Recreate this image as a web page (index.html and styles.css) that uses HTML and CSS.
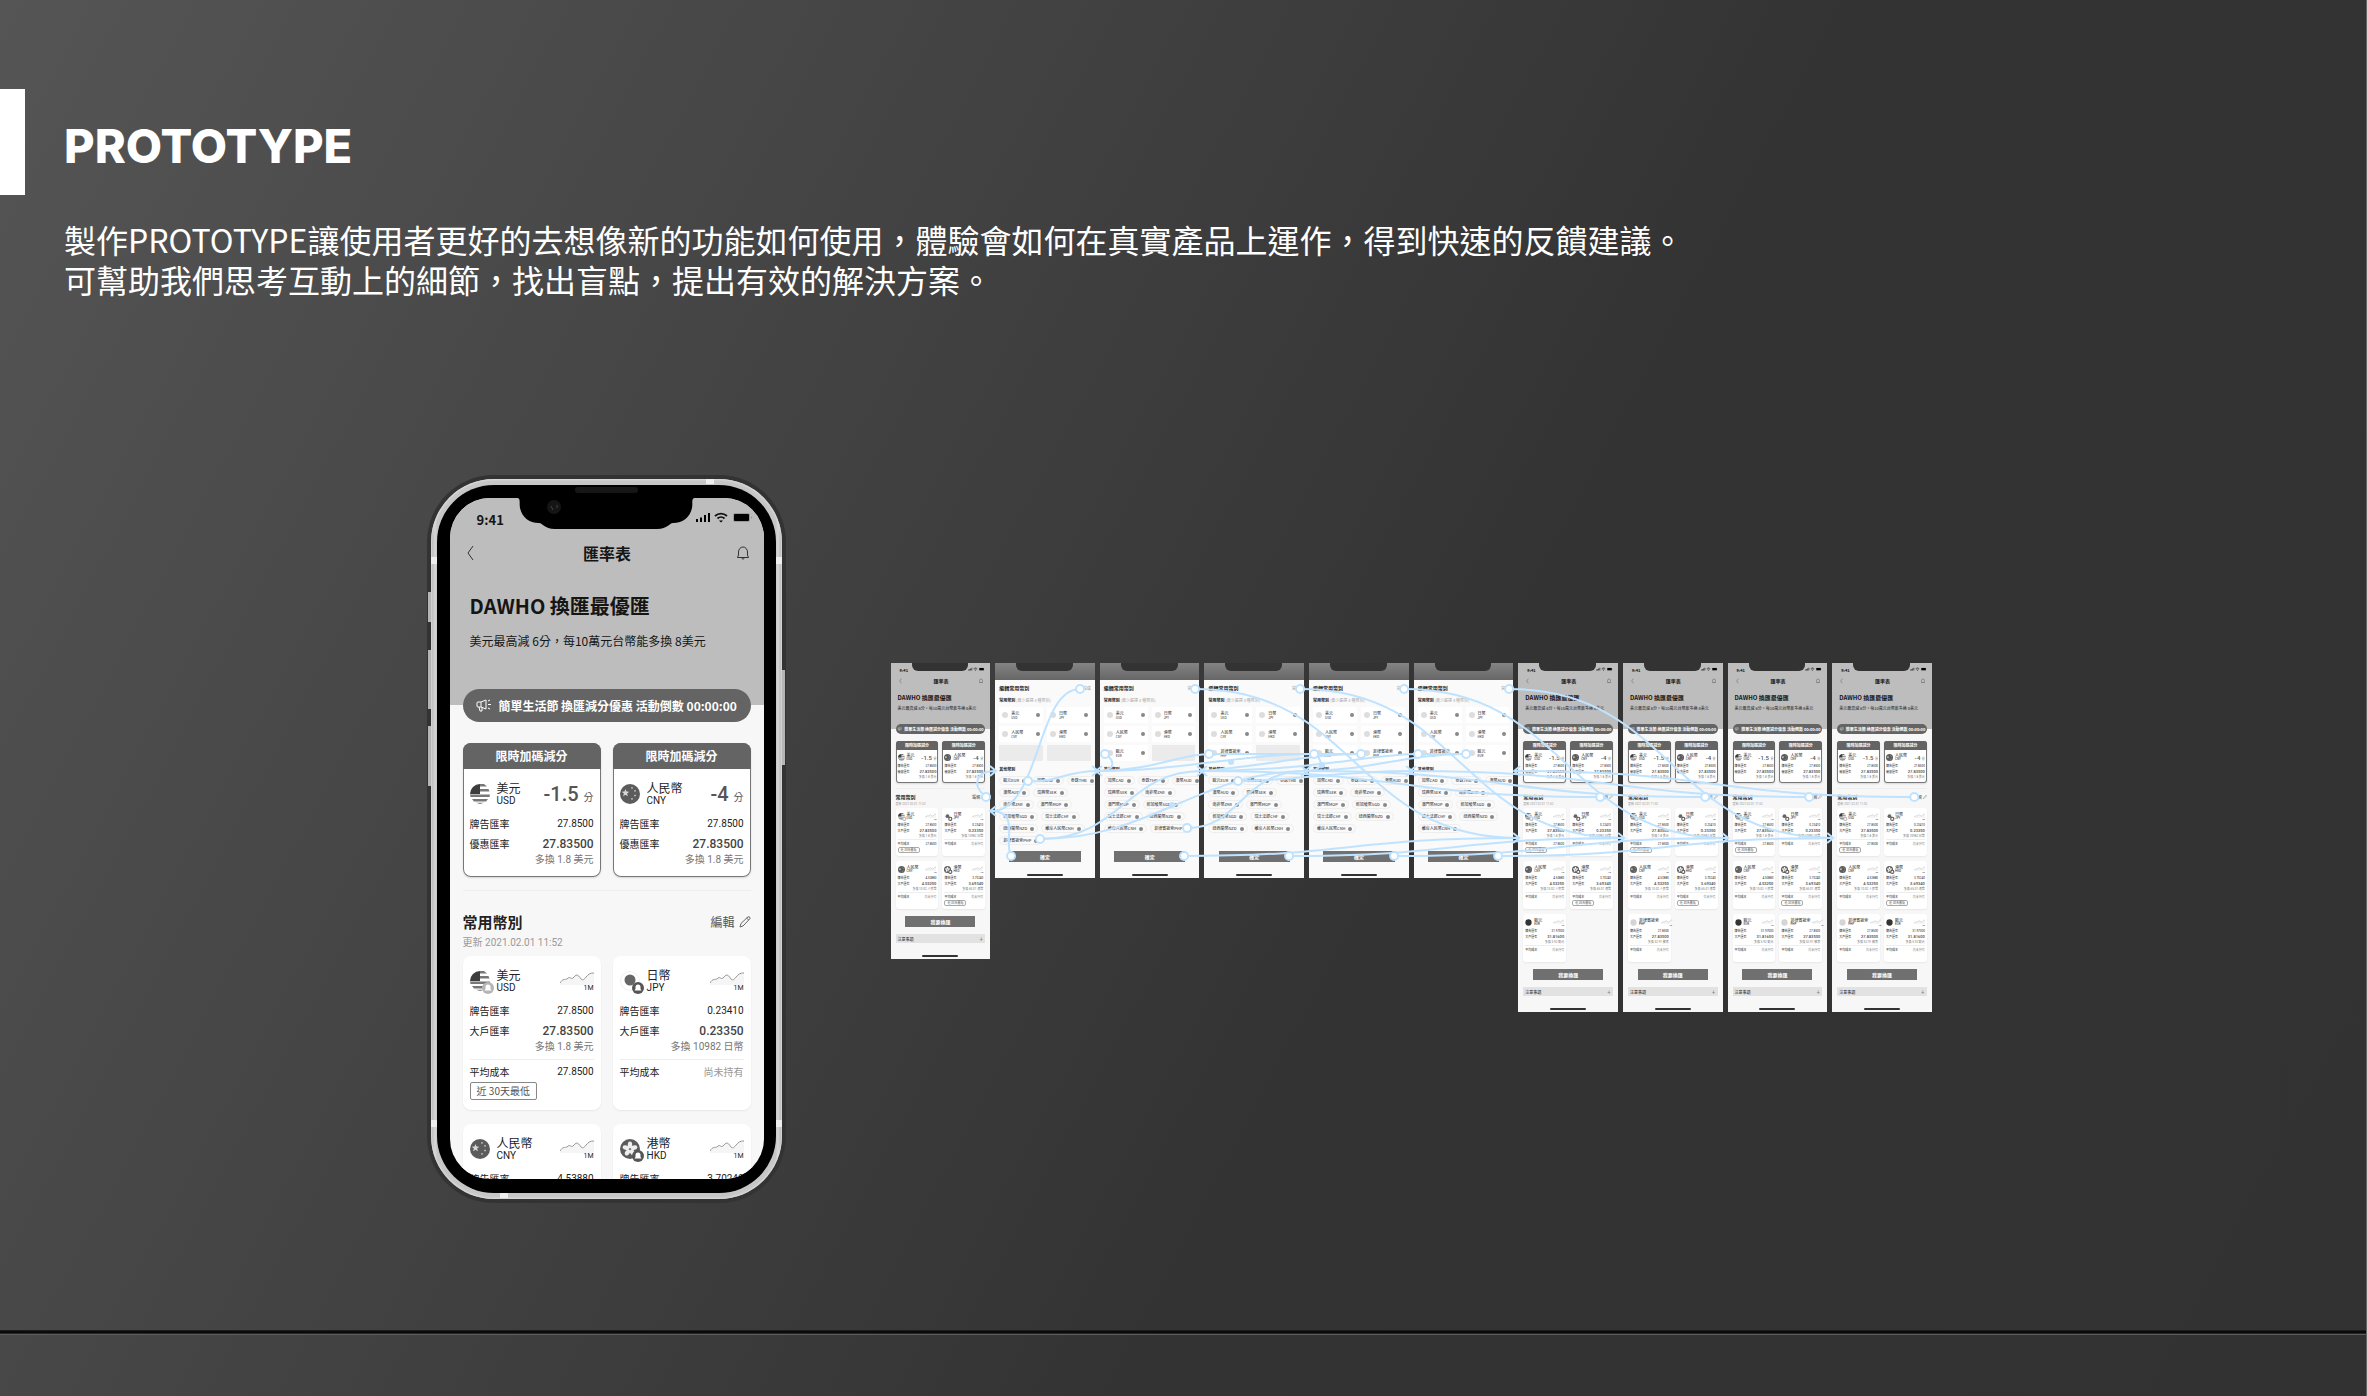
FILE: index.html
```html
<!DOCTYPE html>
<html lang="zh-Hant">
<head>
<meta charset="utf-8">
<title>Prototype</title>
<link rel="stylesheet" href="styles.css">
</head>
<body>
<main class="page">
  <header class="heading">
    <span class="marker"></span>
    <h1>PROTOTYPE</h1>
  </header>
  <p class="intro">製作PROTOTYPE讓使用者更好的去想像新的功能如何使用，體驗會如何在真實產品上運作，得到快速的反饋建議。<br>可幫助我們思考互動上的細節，找出盲點，提出有效的解決方案。</p>

  <section class="stage">
    <div class="device">
      <i class="key mute"></i><i class="key up"></i><i class="key down"></i><i class="key power"></i>
      <i class="band b1"></i><i class="band b2"></i><i class="band b3"></i><i class="band b4"></i><i class="band b5"></i><i class="band b6"></i>
      <div class="bezel">
        <i class="speaker"></i>
        <svg class="notch" viewBox="0 0 178 36"><path d="M0 0C4 0 2 5 3 10C5 19 12 25 22 25C26 25 27 31 38 31H140C151 31 152 25 156 25C166 25 173 19 175 10C176 5 174 0 178 0Z"/><circle cx="37" cy="9" r="7" fill="#151515"/><path d="M34 8l2 4M40 7v3" stroke="#444" fill="none"/></svg>
        <div class="screen" id="phone"></div>
      </div>
    </div>
    <div class="flow">
      <div class="frames" id="frames"></div>
      <svg class="wires" viewBox="0 0 1041 350" preserveAspectRatio="none" id="wires"></svg>
    </div>
  </section>
  <hr class="rule">
</main>
<script src="app.js"></script>
</body>
</html>
```
FILE: styles.css
```css
* { box-sizing: border-box; margin: 0; padding: 0; }
html { background: #333; }
body {
  font-family: "Noto Sans CJK TC", sans-serif;
  color: #fff;
  background: linear-gradient(118deg, #555 0%, #333 60%, #323232 100%);
}
.page { min-height: 100vh; padding-top: 89px; border-right: 1px solid #666; overflow: hidden; }
.heading { display: flex; align-items: center; gap: 39px; }
.marker { width: 25px; height: 106px; background: #fff; }
h1 { font: 800 47px/60px Inter, sans-serif; padding-top: 8px; }
.intro { margin: 24px 64px 0; font-size: 32px; line-height: 40px; }
.rule { margin-top: 131px; border: 0; height: 5px; background: linear-gradient(#1c1c1c 0 1px, #0a0a0a 1px 3px, #262626 3px 4px, #5c5c5c 4px); }
.stage { display: flex; align-items: center; margin-top: 180px; padding-left: 18.2%; }

/* Device shell */
.device {
  position: relative; flex: none; width: 351px; height: 720px; padding: 6px;
  border-radius: 63px; background: linear-gradient(90deg, #a8a8a8, #d8d8d8 4px, #c6c6c6 6px, #c6c6c6 345px, #d8d8d8 347px, #a8a8a8);
  box-shadow: 0 0 0 4px #333, inset 0 0 2px 1px #ddd;
}
.bezel { position: relative; height: 100%; padding: 13px 12px 14px 13px; border-radius: 57px; background: #000; }
.screen { height: 100%; border-radius: 40px; overflow: hidden; }
.notch { position: absolute; left: 80px; top: 13px; width: 178px; height: 36px; fill: #000; }
.speaker { position: absolute; left: 138px; top: 2px; width: 63px; height: 6px; border-radius: 4px; background: #161616; }
.key { position: absolute; width: 3px; left: -3px; background: #b5b5b5; }
.mute { top: 113px; height: 30px; }
.up { top: 171px; height: 59px; }
.down { top: 247px; height: 60px; }
.power { left: 351px; top: 191px; height: 95px; }
.band { position: absolute; background: #eee; width: 6px; height: 7px; }
.b1 { top: 78px; left: 0; } .b2 { top: 78px; right: 0; }
.b3 { bottom: 72px; left: 0; } .b4 { bottom: 72px; right: 0; }
.b5 { top: 0; right: 68px; width: 8px; height: 5px; } .b6 { bottom: 1px; left: 69px; width: 8px; height: 5px; }

/* Exchange-rate screen: sizes are variables so that the flow frames can use a smaller set */
.screen {
  --side: 13px; --gap: 12px; --inset: 7px; --radius: 8px; --flag: 20px;
  --h1: 20px; --h2: 16px; --h3: 15px; --m: 12px; --s: 10px; --xs: 7px;
  --status: 32px; --nav: 45px; --hero-top: 17px; --hero-lh: 28px; --sub-top: 11px; --sub-lh: 20px; --hero-bottom: 54px;
  --pill: 33px; --pill-up: -16px; --promo-top: 21px; --promo-head: 26px; --pad: 12px; --name: 14px; --code: 12px;
  --row-top: 10px; --row: 14px; --row2-top: 4px; --row2: 18px; --row3: 14px; --end: 10px;
  --line-top: 13px; --sec-top: 20px; --sec: 22px; --upd-top: 3px; --upd: 14px; --list-top: 6px; --list-gap: 14px;
  --avg: 5px; --tag-top: 3px; --tag: 18px; --tag-pad: 6px; --big: 20px;
  color: #222; background: #f7f7f7;
}
.screen button { font-family: inherit; border: 0; background: none; color: inherit; }
.hero { background: #bdbdbd; padding-bottom: var(--hero-bottom); color: #151515; }
.status { display: flex; justify-content: space-between; align-items: center; height: var(--status); padding: 12px 11px 0 27px; font-weight: 700; font-size: 13px; line-height: 14px; }
.status svg { width: 57px; height: 12px; margin-top: -6px; }
.nav { display: flex; justify-content: space-between; align-items: center; height: var(--nav); padding: 0 calc(var(--side) + 2px) 0 calc(var(--side) + 3px); font-size: var(--h2); font-weight: 700; }
.nav button { display: flex; }
.nav svg { width: var(--m); height: calc(var(--m) + 2px); }
.hero h2 { margin-top: var(--hero-top); padding-left: calc(var(--side) + var(--inset)); font-size: var(--h1); line-height: var(--hero-lh); font-weight: 700; white-space: nowrap; }
.hero p { margin-top: var(--sub-top); padding-left: calc(var(--side) + var(--inset)); font-size: var(--m); line-height: var(--sub-lh); white-space: nowrap; }
.body { padding: 0 var(--side); }
.pill { display: flex; align-items: center; justify-content: center; gap: var(--pill-gap, 6px); height: var(--pill); margin-top: var(--pill-up); border-radius: 20px; background: #646464; color: #fff; font-size: var(--m); font-weight: 700; white-space: nowrap; }
.pill svg { width: 16px; height: 14px; flex: none; }
.grid { display: grid; grid-template-columns: minmax(0, 1fr) minmax(0, 1fr); gap: var(--list-gap) var(--gap); margin-top: var(--list-top); }
.promos { margin-top: var(--promo-top); }
.card { min-width: 0; border-radius: var(--radius); background: #fff; box-shadow: 0 1px 2px #0001; padding: var(--pad) var(--inset) var(--end); }
.promo { padding: 0 0 var(--end); overflow: hidden; box-shadow: inset 0 0 0 1px #777, 0 1px 2px #0002; }
.promo h3 { height: var(--promo-head); line-height: var(--promo-head); text-align: center; font-size: var(--m); font-weight: 700; color: #fff; background: #646464; }
.promo .inner { padding: var(--pad) var(--inset) 0; }
.fx { display: flex; gap: var(--inset); align-items: center; }
.fx .flag { position: relative; width: var(--flag); height: var(--flag); flex: none; display: block; overflow: visible; }
.fx .label { flex: 1; font-size: var(--m); line-height: var(--name); white-space: nowrap; }
.fx .label small { display: block; font: 400 var(--s)/var(--code) Roboto, sans-serif; }
.cut { font: 500 var(--big)/var(--flag) Roboto, sans-serif; color: #555; white-space: nowrap; }
.cut small { font: 400 var(--s) "Noto Sans CJK TC", sans-serif; }
.trend { font: 400 var(--xs)/var(--xs) Roboto, sans-serif; text-align: right; }
.trend svg { display: block; width: 34px; height: 15px; }
.row { display: flex; justify-content: space-between; font-size: var(--s); line-height: var(--row); margin-top: var(--row2-top); white-space: nowrap; }
.row b, .more { font-family: Roboto, "Noto Sans CJK TC", sans-serif; font-weight: 400; }
.row.first { margin-top: var(--row-top); }
.row.rate { line-height: var(--row2); }
.row.rate b { font-size: var(--m); font-weight: 500; color: #444; }
.more { text-align: right; font-size: var(--s); line-height: var(--row3); color: #777; white-space: nowrap; }
.row.avg { margin-top: var(--avg); padding-top: var(--avg); border-top: 1px solid #eee; }
.row .none { color: #999; }
.tag { display: block; width: max-content; margin-top: var(--tag-top); height: var(--tag); line-height: calc(var(--tag) - 2px); padding: 0 var(--tag-pad); border: 1px solid #888; border-radius: 2px; font-size: var(--s); color: #555; white-space: nowrap; }
.line { height: 1px; margin-top: var(--line-top); background: #eee; }
.sec { display: flex; justify-content: space-between; margin-top: var(--sec-top); line-height: var(--sec); }
.sec h3 { font-size: var(--h3); line-height: var(--sec); font-weight: 700; }
.sec button { display: flex; align-items: center; gap: 4px; font-size: var(--m); line-height: var(--sec); color: #555; }
.sec svg { width: var(--m); height: var(--m); }
.upd { margin-top: var(--upd-top); font: 400 var(--s)/var(--upd) Roboto, "Noto Sans CJK TC", sans-serif; color: #999; }

/* Small frames of the flow */
.flow { position: relative; margin-left: 109px; padding-bottom: 3px; flex: none; width: 53.8%; }
.frames { display: grid; grid-template-columns: repeat(10, minmax(0, 1fr)); gap: 5px; align-items: start; }
.mini {
  --side: 5px; --gap: 4px; --inset: 2px; --radius: 3px; --flag: 7px;
  --h1: 6px; --h2: 5px; --h3: 5px; --m: 4px; --s: 3px; --xs: 2px; --big: 6px;
  --status: 11px; --nav: 13px; --hero-top: 7px; --hero-lh: 8px; --sub-top: 3px; --sub-lh: 6px; --hero-bottom: 18px;
  --pill: 10px; --pill-up: -5px; --pill-gap: 1px; --promo-top: 7px; --promo-head: 9px; --pad: 3px; --name: 4px; --code: 4px;
  --row-top: 2px; --row: 6px; --row2-top: 0px; --row2: 6px; --row3: 4px; --end: 4px;
  --line-top: 5px; --sec-top: 5px; --sec: 6px; --upd-top: 2px; --upd: 4px; --list-top: 2px; --list-gap: 5px;
  --avg: 1px; --tag-top: 0px; --tag: 6px; --tag-pad: 2px;
  position: relative; height: auto; border-radius: 0; padding-bottom: 16px;
}
.mini::before { content: ""; position: absolute; left: 21%; right: 22%; top: 0; height: 8px; border-radius: 0 0 6px 6px; background: #333; }
.mini::after { content: ""; position: absolute; left: 32%; right: 32%; bottom: 2px; height: 2px; border-radius: 1px; background: #333; }
.mini .status { padding: 3px 5px 0 9px; font-size: 4px; line-height: 6px; }
.mini .status svg { width: 17px; height: 4px; margin-top: -2px; }
.mini .pill svg { width: 6px; height: 4px; }
.mini .trend svg { width: 11px; height: 5px; }
.mini .sec button { gap: 1px; }
.mini .grid:not(.promos) .card { min-height: 48px; padding: 4px 2px 3px; }
.mini .promo { min-height: 42px; }
.mini .tag { border-color: #aaa; }
.cta { display: block; width: 78%; height: 11px; margin: 7px auto 0; line-height: 11px; text-align: center; font-size: 5px; font-weight: 700; }
.screen .cta { background: #707070; color: #fff; }
.notice { display: flex; justify-content: space-between; align-items: center; width: 100%; height: 9px; margin-top: 7px; padding: 0 2px; font-size: 4px; }
.screen .notice { background: #e2e2e2; }

.edit { background: linear-gradient(#848484, #666 17px, #fafafa 17px); padding-top: 17px; height: 215px; }
.sheet { height: 182px; display: flex; flex-direction: column; padding: 4px 4px 0; border-radius: 2px 2px 0 0; background: #fafafa; }
.sheet h2 { display: flex; justify-content: space-between; align-items: center; font-size: 5px; line-height: 8px; font-weight: 700; }
.sheet h2 button { font-size: 4px; line-height: 8px; color: #888; }
.sheet h3 { margin-top: 5px; font-size: 4px; line-height: 6px; font-weight: 700; white-space: nowrap; }
.sheet h3 span { font-weight: 400; color: #aaa; }
.slots { display: grid; grid-template-columns: minmax(0, 1fr) minmax(0, 1fr); gap: 3px 4px; margin-top: 4px; }
.slot { display: flex; align-items: center; gap: 3px; height: 16px; padding: 0 3px; background: #fff; border-radius: 1px; font-size: 4px; line-height: 5px; white-space: nowrap; }
.slot.empty { background: #ebebeb; }
.slot i { width: 6px; height: 6px; border-radius: 50%; background: #ddd; }
.slot span { flex: 1; }
.slot small { display: block; font-size: 3px; line-height: 4px; }
.dot { width: 4px; height: 4px; border-radius: 50%; background: #888; flex: none; }
.chips { margin-top: 4px; display: grid; gap: 3px; }
.chips div { display: flex; gap: 3px; }
.chip { display: flex; align-items: center; gap: 3px; height: 9px; padding: 0 3px; border: 1px solid #eee; border-radius: 5px; font-size: 4px; line-height: 7px; white-space: nowrap; }
.sheet .cta { margin: auto auto 0; flex: none; }
.wires { position: absolute; left: 0; top: 0; width: 100%; height: 350px; fill: none; stroke: #bfe3ff; stroke-width: 2; overflow: visible; }
.wires circle { fill: #fff; }
.wires .joint { fill: #bfe3ff; }
```
FILE: app.js
```js
const circle = (x, y, r, f) => `<circle cx="${x}" cy="${y}" r="${r}" fill="${f}"/>`;
const star = (x, y, r) => {
  let p = '';
  for (let i = 0; i < 10; i++) {
    const a = Math.PI * (i / 5 - 0.5), q = i % 2 ? r * 0.42 : r;
    p += `${(x + q * Math.cos(a)).toFixed(1)},${(y + q * Math.sin(a)).toFixed(1)} `;
  }
  return `<polygon points="${p}" fill="#d8d8d8"/>`;
};
const badge = (c) => circle(18, 17, 6, c) + '<path d="M18 13.500a2.500 2.500 0 0 1 2.500 2.500v2l1 1.500h-7l1-1.500v-2a2.500 2.500 0 0 1 2.500-2.500z" fill="#fff"/>';
const stripes = '<path d="M10 0h4l3 2.500h-7zM10 5h8.500l1 2.500H10zM0 10.500h20l-.5 2.500H.5zM2 15h16l-2 2.500H4z" fill="#777"/><path d="M10 0A10 10 0 0 0 0 10h10z" fill="#3c3c3c"/><path d="M6 18.800h8L10 20z" fill="#777"/>';
const petals = [0, 72, 144, 216, 288].map(a => `<ellipse cx="10" cy="5.800" rx="2.200" ry="3.400" fill="#eee" transform="rotate(${a} 10 10)"/>`).join('');
const flags = {
  US: stripes,
  USD: stripes + badge('#b5b5b5'),
  JPY: '<circle cx="10" cy="10" r="9.500" fill="#fff" stroke="#f0f0f0"/>' + circle(10, 9, 5.5, '#666') + badge('#555'),
  CNY: circle(10, 10, 10, '#5c5c5c') + star(5.5, 9, 4) + star(12, 4, 1.3) + star(15, 7, 1.3) + star(15, 11.5, 1.3) + star(12, 15, 1.3),
  HKD: circle(10, 10, 10, '#5c5c5c') + petals + badge('#555'),
  EUR: circle(10, 10, 9, '#333'),
  PHP: circle(10, 10, 9, '#d5d5d5')
};
const flag = k => `<svg class="flag" viewBox="0 0 20 20">${flags[k]}</svg>`;
const trend = '<svg viewBox="0 0 34 15"><path d="M0 13C3 8 5 10 7 9C10 5 11 11 14 7C17 3 19 6 21 9C25 13 26 2 34 3V15H0z" fill="#f5f5f5"/><path d="M0 13C3 8 5 10 7 9C10 5 11 11 14 7C17 3 19 6 21 9C25 13 26 2 34 3" fill="none" stroke="#999"/></svg>';
const fxHead = (k, name, code, right) => `<div class="fx">${flag(k)}<div class="label">${name}<small>${code}</small></div>${right}</div>`;
const row = (cls, a, b) => `<div class="row ${cls}"><span>${a}</span>${b}</div>`;

const promo = (k, name, code, cut) => `<article class="card promo"><h3>限時加碼減分</h3><div class="inner">
${fxHead(k, name, code, `<div class="cut">${cut} <small>分</small></div>`)}
${row('first', '牌告匯率', '<b>27.8500</b>')}${row('rate', '優惠匯率', '<b>27.83500</b>')}<div class="more">多換 1.8 美元</div></div></article>`;

const rates = {
  USD: ['美元', '27.8500', '27.83500', '1.8 美元', '27.8500', true],
  JPY: ['日幣', '0.23410', '0.23350', '10982 日幣', '', false],
  CNY: ['人民幣', '4.53880', '4.53250', '10.02 人民幣', '', false],
  HKD: ['港幣', '3.70240', '3.69340', '65.01 港幣', '', true],
  EUR: ['歐元', '31.97000', '31.81600', '5.92 歐元', '', false],
  PHP: ['菲律賓披索', '27.8500', '27.83500', '52.91 披索', '', false]
};
const card = code => {
  const [name, list, best, more, cost, low] = rates[code];
  return `<article class="card">${fxHead(code, name, code, `<div class="trend">${trend}1M</div>`)}
${row('first', '牌告匯率', `<b>${list}</b>`)}${row('rate', '大戶匯率', `<b>${best}</b>`)}<div class="more">多換 ${more}</div>
${row('avg', '平均成本', cost ? `<b>${cost}</b>` : '<span class="none">尚未持有</span>')}${low ? '<span class="tag">近 30天最低</span>' : ''}</article>`;
};

const home = (codes, footer) => `<div class="hero">
<div class="status"><span>9:41</span><svg viewBox="0 0 57 12"><path d="M0 8h2v3H0zM4 6.500h2V11H4zM8 4h2v7H8zM12 2h2v9h-2z"/><path d="M19 5a9 9 0 0 1 12 0M21.500 7.500a5 5 0 0 1 7 0" fill="none" stroke="#111" stroke-width="1.800"/><path d="M23 9.500h4L25 11.500z"/><rect x="37" y="2" width="17" height="9" rx="2" fill="#999"/><rect x="38" y="3" width="15" height="7" rx="1"/><path d="M55 5v3l1.500-1.500z" fill="#999"/></svg></div>
<div class="nav"><button aria-label="返回"><svg viewBox="0 0 12 14" fill="none" stroke="#333"><path d="M7 0L2 7l5 7"/></svg></button><span>匯率表</span><button aria-label="通知"><svg viewBox="0 0 12 14" fill="none" stroke="#333"><path d="M.5 11.500H11.500L10.500 9V6A4.500 5 0 0 0 1.500 6V9zM4.500 12Q6 14.500 7.500 12"/></svg></button></div>
<h2>DAWHO 換匯最優匯</h2><p>美元最高減 6分，每10萬元台幣能多換 8美元</p></div>
<div class="body"><div class="pill"><svg viewBox="0 0 16 14" fill="none" stroke="#fff"><path d="M1 4q0-1 1-1h3l5-2v9L5 8H2Q1 8 1 7zM5 3v5M3 8l1 4h2V8.500M12 2l2-1M12 5.500h3M12 9l2 1"/></svg>簡單生活節 換匯減分優惠 活動倒數 00:00:00</div>
<div class="grid promos">${promo('US', '美元', 'USD', '-1.5')}${promo('CNY', '人民幣', 'CNY', '-4')}</div>
<div class="line"></div>
<div class="sec"><h3>常用幣別</h3><button>編輯<svg viewBox="0 0 12 12" fill="none" stroke="#666"><path d="M1 11l1-3.500L9 .8q2-.6 2 1.800L4 10zM7.500 2l2.300 2"/></svg></button></div>
<div class="upd">更新 2021.02.01 11:52</div>
<div class="grid">${codes.map(card).join('')}</div>
${footer ? '<button class="cta">我要換匯</button><button class="notice"><span>注意事項</span><span>＋</span></button>' : ''}</div>`;

const names = { EUR: '歐元', CAD: '加幣', THB: '泰銖', AUD: '澳幣', SEK: '瑞典幣', ZAR: '南非幣', MOP: '澳門幣', SGD: '新加坡幣', CHF: '瑞士法郎', NZD: '紐西蘭幣', CNH: '離岸人民幣', PHP: '菲律賓披索', USD: '美元', JPY: '日幣', CNY: '人民幣', HKD: '港幣' };
const edit = (extra, chips) => {
  const slots = ['USD', 'JPY', 'CNY', 'HKD', ...extra];
  while (slots.length < 6) slots.push('');
  return `<div class="sheet"><h2>編輯常用幣別<button>完成</button></h2><h3>常用幣別 <span>(最少選擇 4 種幣別)</span></h3>
<div class="slots">${slots.map(c => c ? `<div class="slot"><i></i><span>${names[c]}<small>${c}</small></span><b class="dot"></b></div>` : '<div class="slot empty"></div>').join('')}</div>
<h3>其他幣別</h3><div class="chips">${chips.split('/').map(r => `<div>${r.split(' ').map(c => `<span class="chip">${names[c]}${c}<b class="dot"></b></span>`).join('')}</div>`).join('')}</div>
<button class="cta">確定</button></div>`;
};

const base = ['USD', 'JPY', 'CNY', 'HKD'];
document.getElementById('phone').innerHTML = home(base, false);
const homeFrame = extra => `<div class="screen mini">${home([...base, ...extra], true)}</div>`;
const editFrame = (extra, chips) => `<div class="screen mini edit">${edit(extra, chips)}</div>`;
const rest = 'CAD THB AUD/SEK ZAR/MOP SGD/CHF NZD/CNH';
document.getElementById('frames').innerHTML = [
  homeFrame([]),
  editFrame([], 'EUR CAD THB/AUD SEK/ZAR MOP/SGD CHF/NZD CNH/PHP'),
  editFrame(['EUR'], rest + ' PHP'),
  editFrame(['PHP'], 'EUR CAD THB/AUD SEK/ZAR MOP/SGD CHF/NZD CNH'),
  editFrame(['EUR', 'PHP'], rest),
  editFrame(['PHP', 'EUR'], rest),
  homeFrame(['EUR']), homeFrame(['PHP']), homeFrame(['EUR', 'PHP']), homeFrame(['PHP', 'EUR'])
].join('');

/* Links between frames: start point, control offsets, end point */
const links = [
  'M95 134C80 122 85 108 104 108', 'M189 26C145 26 150 148 100 148', 'M120 193C112 180 130 148 100 148',
  'M137 118C165 120 175 108 206 108', 'M149 176C230 176 235 108 311 108', 'M149 176C260 176 310 108 415 108',
  'M214 91C222 95 228 108 206 108', 'M296 165C350 165 350 108 415 108', 'M318 91C290 91 260 108 206 108',
  'M423 91C350 91 290 108 206 108', 'M423 91C430 94 436 108 415 108', 'M470 91C420 91 380 102 311 108',
  'M423 91H470', 'M318 91H423', 'M527 91H575', 'M527 91C480 91 420 108 311 108', 'M575 91C510 91 480 108 415 108',
  'M347 118C400 118 450 108 520 108',
  'M304 26C465 26 465 175 627 175', 'M409 26C570 26 570 175 732 175', 'M513 26C675 26 675 175 836 175', 'M618 26C780 26 780 175 941 175',
  'M293 193C460 193 460 175 627 175', 'M398 193C565 193 565 175 732 175', 'M503 193C670 193 670 175 836 175', 'M607 193C775 193 775 175 941 175',
  'M709 134C510 134 510 108 311 108', 'M814 134C614 134 614 108 415 108', 'M918 134C720 134 720 108 520 108', 'M1023 134C823 134 823 108 624 108'
];
const right = [[104, 108], [206, 108], [311, 108], [415, 108], [520, 108], [627, 175], [732, 175], [836, 175], [941, 175]];
const left = [[100, 148], [206, 108], [311, 108], [415, 108], [520, 108], [624, 108]];
const nodes = [[95, 134], [189, 26], [137, 118], [149, 176], [120, 193], [214, 91], [304, 26], [296, 165], [293, 193], [318, 91], [347, 118], [398, 193], [409, 26], [423, 91], [470, 91], [503, 193], [513, 26], [527, 91], [575, 91], [607, 193], [618, 26], [709, 134], [814, 134], [918, 134], [1023, 134]];
document.getElementById('wires').innerHTML =
  links.map(d => `<path d="${d}"/>`).join('') +
  right.map(([x, y]) => `<path d="M${x - 5} ${y - 5}l6 5l-6 5"/>`).join('') +
  left.map(([x, y]) => `<path d="M${x + 5} ${y - 5}l-6 5l6 5"/>`).join('') +
  [[281, 142], [340, 99], [431, 102]].map(([x, y]) => `<circle class="joint" cx="${x}" cy="${y}" r="2"/>`).join('') +
  nodes.map(([x, y]) => `<circle cx="${x}" cy="${y}" r="4"/>`).join('');
```
